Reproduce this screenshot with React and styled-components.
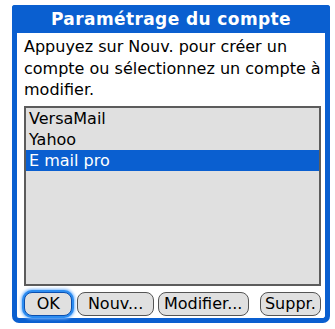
import React from "react";
import styled, { createGlobalStyle } from "styled-components";

const Global = createGlobalStyle`
  html, body { margin: 0; padding: 0; background: #ffffff; }
  body { font-family: "DejaVu Sans", "Liberation Sans", sans-serif; }
`;

const BLUE = "#0a5fd0";

const Frame = styled.div`
  margin: 5px 0 0 12px;
  width: 318px;
  height: 318px;
  box-sizing: border-box;
  display: flex;
  flex-direction: column;
  background: #ffffff;
  border: 5px solid ${BLUE};
  border-top: none;
  border-radius: 3px 3px 7px 7px;
`;

const TitleBar = styled.div`
  height: 28px;
  margin: 0 -5px;
  background: ${BLUE};
  color: #ffffff;
  font-weight: bold;
  font-size: 17px;
  letter-spacing: 0.4px;
  display: flex;
  align-items: center;
  justify-content: center;
  border-radius: 3px 3px 0 0;
`;

const Body = styled.div`
  flex: 1;
  display: flex;
  flex-direction: column;
  padding: 3px 4px 0 7px;
`;

const Message = styled.p`
  margin: 0;
  font-size: 16px;
  line-height: 21.5px;
  color: #000000;
`;

const ListBox = styled.div`
  margin-top: 5px;
  height: 180px;
  box-sizing: border-box;
  border: 2px solid #5c5c5c;
  background: #e0e0e0;
  display: flex;
  flex-direction: column;
`;

const Row = styled.div`
  height: 21px;
  line-height: 21px;
  padding-left: 3px;
  font-size: 16px;
  color: ${(p) => (p.$selected ? "#ffffff" : "#000000")};
  background: ${(p) => (p.$selected ? BLUE : "transparent")};
`;

const ButtonBar = styled.div`
  display: flex;
  align-items: center;
  margin-top: 6px;
`;

const Button = styled.div`
  box-sizing: border-box;
  width: ${(p) => p.$w}px;
  height: 24px;
  margin-left: ${(p) => p.$ml || 0}px;
  border: 1.5px solid ${(p) => (p.$focus ? "#0a4fb0" : "#555555")};
  border-radius: 8px;
  background: #e0e0e0;
  font-size: 16px;
  color: #000000;
  display: flex;
  align-items: center;
  justify-content: center;
  box-shadow: ${(p) => (p.$focus ? `0 0 0 2px #2c8cf0, 0 0 3px 3px #7ab8ff` : "none")};
`;

export default function App() {
  return (
    <>
      <Global />
      <Frame>
        <TitleBar>Paramétrage du compte</TitleBar>
        <Body>
          <Message>
            Appuyez sur Nouv. pour créer un compte ou sélectionnez un compte à modifier.
          </Message>
          <ListBox>
            <Row>VersaMail</Row>
            <Row>Yahoo</Row>
            <Row $selected>E mail pro</Row>
          </ListBox>
          <ButtonBar>
            <Button $w={49} $focus>OK</Button>
            <Button $w={77} $ml={5}>Nouv...</Button>
            <Button $w={92} $ml={4}>Modifier...</Button>
            <Button $w={62} $ml={11}>Suppr.</Button>
          </ButtonBar>
        </Body>
      </Frame>
    </>
  );
}
